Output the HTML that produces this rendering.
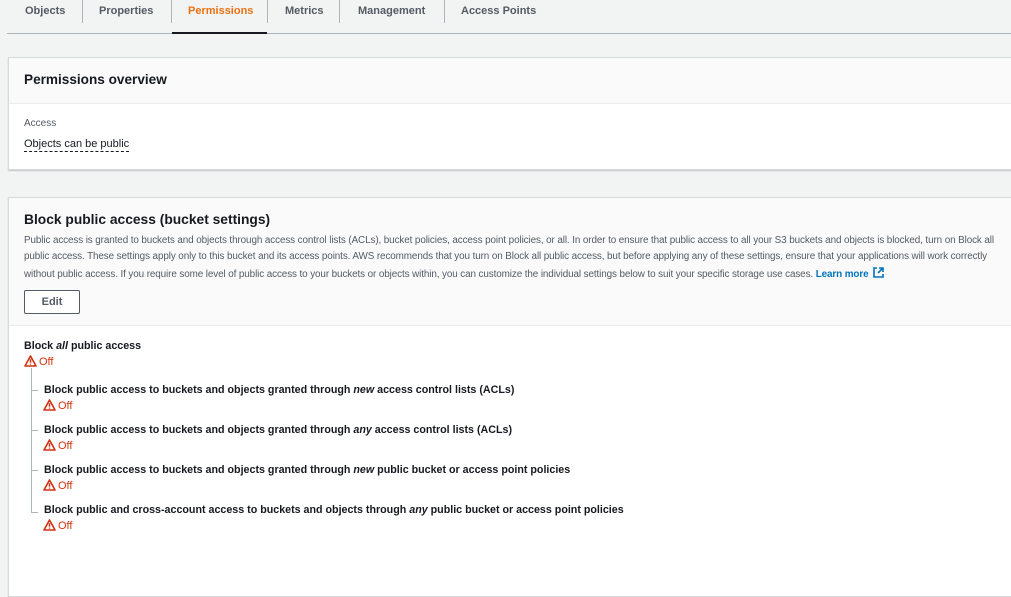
<!DOCTYPE html>
<html><head><style>
*{margin:0;padding:0;box-sizing:border-box}
body{width:1011px;height:544px;overflow:hidden;background:#f2f3f3;font-family:"Liberation Sans",sans-serif;color:#16191f;position:relative}
.a{position:absolute;white-space:nowrap}
.tab{position:absolute;top:5px;font-size:11px;font-weight:bold;color:#545b64}
.sep{position:absolute;top:0;width:1px;height:23px;background:#aab7b8}
.card{position:absolute;left:8px;width:1010px;background:#fff;border:1px solid #d5dbdb;box-shadow:0 1px 1px rgba(0,22,40,.2)}
.hd{background:#fafafa;border-bottom:1px solid #eaeded}
.p{font-size:9.9px;color:#545b64;left:24px}
.b{font-size:10.7px;font-weight:bold}
.off{font-size:11px;color:#d13212}
.off svg{vertical-align:-2px;margin-right:2px}
</style></head><body>
<div class="tab" style="left:25px">Objects</div>
<div class="sep" style="left:82px"></div>
<div class="tab" style="left:99px">Properties</div>
<div class="sep" style="left:171px"></div>
<div class="tab" style="left:188px;color:#ec7211">Permissions</div>
<div class="sep" style="left:267px"></div>
<div class="tab" style="left:285px">Metrics</div>
<div class="sep" style="left:339px"></div>
<div class="tab" style="left:358px">Management</div>
<div class="sep" style="left:444px"></div>
<div class="tab" style="left:461px">Access Points</div>
<div class="a" style="left:7px;top:33px;width:1004px;height:1px;background:#aab7b8"></div>
<div class="a" style="left:172px;top:32px;width:95px;height:2px;background:#16191f"></div>

<div class="card" style="top:57px;height:113px">
<div class="hd" style="height:46px"></div>
</div>
<div class="a b" style="left:24px;top:72px;font-size:13.6px">Permissions overview</div>
<div class="a" style="left:24px;top:118px;font-size:10px;color:#545b64">Access</div>
<div class="a" style="left:24px;top:137px;font-size:11px;border-bottom:1px dashed #16191f;line-height:14px">Objects can be public</div>

<div class="card" style="top:197px;height:400px">
<div class="hd" style="height:128px"></div>
</div>
<div class="a b" style="left:24px;top:212px;font-size:13.8px">Block public access (bucket settings)</div>
<div class="a p" style="top:235px;letter-spacing:-0.1px">Public access is granted to buckets and objects through access control lists (ACLs), bucket policies, access point policies, or all. In order to ensure that public access to all your S3 buckets and objects is blocked, turn on Block all</div>
<div class="a p" style="top:251px;letter-spacing:-0.1px">public access. These settings apply only to this bucket and its access points. AWS recommends that you turn on Block all public access, but before applying any of these settings, ensure that your applications will work correctly</div>
<div class="a p" style="top:267px;letter-spacing:-0.1px">without public access. If you require some level of public access to your buckets or objects within, you can customize the individual settings below to suit your specific storage use cases. <b style="color:#0073bb">Learn more</b> <svg width="11" height="11" viewBox="0 0 11 11" style="vertical-align:-1px;margin-left:2px"><path d="M4 1H1v9h9V7M6 1h4v4M10 1L5 6" fill="none" stroke="#0073bb" stroke-width="1.6"/></svg></div>
<div class="a" style="left:24px;top:290px;width:56px;height:24px;border:1px solid #545b64;border-radius:2px;font-size:11px;font-weight:bold;color:#545b64;text-align:center;line-height:22px;background:#fff">Edit</div>

<svg class="a" style="left:0;top:0" width="60" height="544"><path d="M31.5 368V512.5H38M31.5 390.5H38M31.5 430.5H38M31.5 470.5H38" fill="none" stroke="#aab7b8"/></svg>

<div class="a b" style="left:24px;top:340px">Block <i>all</i> public access</div>
<div class="a off" style="left:24px;top:355px"><svg width="13" height="12" viewBox="0 0 13 12"><path d="M6.5 1L12 11H1Z" fill="none" stroke="#d13212" stroke-width="1.6" stroke-linejoin="round"/><path d="M6.5 4.3v3.4M6.5 8.6v1" stroke="#d13212" stroke-width="1.5"/></svg>Off</div>

<div class="a b" style="left:44px;top:384px">Block public access to buckets and objects granted through <i>new</i> access control lists (ACLs)</div>
<div class="a off" style="left:43px;top:399px"><svg width="13" height="12" viewBox="0 0 13 12"><path d="M6.5 1L12 11H1Z" fill="none" stroke="#d13212" stroke-width="1.6" stroke-linejoin="round"/><path d="M6.5 4.3v3.4M6.5 8.6v1" stroke="#d13212" stroke-width="1.5"/></svg>Off</div>
<div class="a b" style="left:44px;top:424px">Block public access to buckets and objects granted through <i>any</i> access control lists (ACLs)</div>
<div class="a off" style="left:43px;top:439px"><svg width="13" height="12" viewBox="0 0 13 12"><path d="M6.5 1L12 11H1Z" fill="none" stroke="#d13212" stroke-width="1.6" stroke-linejoin="round"/><path d="M6.5 4.3v3.4M6.5 8.6v1" stroke="#d13212" stroke-width="1.5"/></svg>Off</div>
<div class="a b" style="left:44px;top:464px">Block public access to buckets and objects granted through <i>new</i> public bucket or access point policies</div>
<div class="a off" style="left:43px;top:479px"><svg width="13" height="12" viewBox="0 0 13 12"><path d="M6.5 1L12 11H1Z" fill="none" stroke="#d13212" stroke-width="1.6" stroke-linejoin="round"/><path d="M6.5 4.3v3.4M6.5 8.6v1" stroke="#d13212" stroke-width="1.5"/></svg>Off</div>
<div class="a b" style="left:44px;top:504px">Block public and cross-account access to buckets and objects through <i>any</i> public bucket or access point policies</div>
<div class="a off" style="left:43px;top:519px"><svg width="13" height="12" viewBox="0 0 13 12"><path d="M6.5 1L12 11H1Z" fill="none" stroke="#d13212" stroke-width="1.6" stroke-linejoin="round"/><path d="M6.5 4.3v3.4M6.5 8.6v1" stroke="#d13212" stroke-width="1.5"/></svg>Off</div>
</body></html>
